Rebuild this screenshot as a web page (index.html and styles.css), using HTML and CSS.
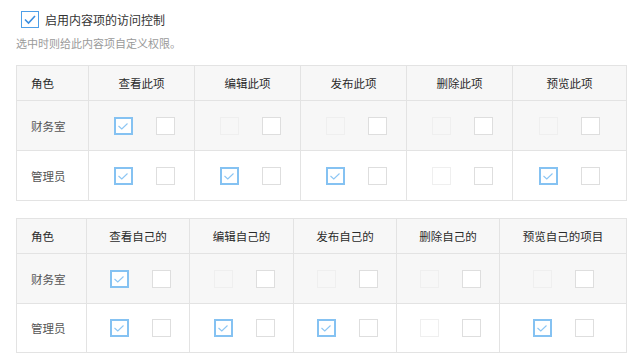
FILE: index.html
```html
<!DOCTYPE html>
<html lang="zh-CN">
<head>
<meta charset="utf-8">
<title>访问控制</title>
<link rel="stylesheet" href="styles.css">
</head>
<body>
<div class="page">
  <label class="enable">
    <span class="cb-main"><svg viewBox="0 0 18 17" width="18" height="17"><polyline points="4,8.5 7.5,12 14,5" fill="none" stroke="#3a8ee0" stroke-width="1.6"/></svg></span>
    <span class="enable-text">启用内容项的访问控制</span>
  </label>
  <p class="hint">选中时则给此内容项自定义权限。</p>

  <table class="perm perm-a">
    <colgroup>
      <col class="a-role"><col class="a-std"><col class="a-std"><col class="a-std"><col class="a-std"><col class="a-last">
    </colgroup>
    <thead>
      <tr><th class="role">角色</th><th>查看此项</th><th>编辑此项</th><th>发布此项</th><th>删除此项</th><th>预览此项</th></tr>
    </thead>
    <tbody>
      <tr class="alt">
        <td class="role">财务室</td>
        <td><div class="pair"><span class="cb on"><svg viewBox="0 0 18 18"><polyline points="4.5,9 7.8,12 13.5,6.5"/></svg></span><span class="cb"></span></div></td>
        <td><div class="pair"><span class="cb dis"></span><span class="cb"></span></div></td>
        <td><div class="pair"><span class="cb dis"></span><span class="cb"></span></div></td>
        <td><div class="pair"><span class="cb dis"></span><span class="cb"></span></div></td>
        <td class="last"><div class="pair"><span class="cb dis"></span><span class="cb"></span></div></td>
      </tr>
      <tr>
        <td class="role">管理员</td>
        <td><div class="pair"><span class="cb on"><svg viewBox="0 0 18 18"><polyline points="4.5,9 7.8,12 13.5,6.5"/></svg></span><span class="cb"></span></div></td>
        <td><div class="pair"><span class="cb on"><svg viewBox="0 0 18 18"><polyline points="4.5,9 7.8,12 13.5,6.5"/></svg></span><span class="cb"></span></div></td>
        <td><div class="pair"><span class="cb on"><svg viewBox="0 0 18 18"><polyline points="4.5,9 7.8,12 13.5,6.5"/></svg></span><span class="cb"></span></div></td>
        <td><div class="pair"><span class="cb dis"></span><span class="cb"></span></div></td>
        <td class="last"><div class="pair"><span class="cb on"><svg viewBox="0 0 18 18"><polyline points="4.5,9 7.8,12 13.5,6.5"/></svg></span><span class="cb"></span></div></td>
      </tr>
    </tbody>
  </table>

  <table class="perm perm-b">
    <colgroup>
      <col class="b-role"><col class="b-std"><col class="b-std2"><col class="b-std"><col class="b-std"><col class="b-last">
    </colgroup>
    <thead>
      <tr><th class="role">角色</th><th>查看自己的</th><th>编辑自己的</th><th>发布自己的</th><th>删除自己的</th><th>预览自己的项目</th></tr>
    </thead>
    <tbody>
      <tr class="alt">
        <td class="role">财务室</td>
        <td><div class="pair"><span class="cb on"><svg viewBox="0 0 18 18"><polyline points="4.5,9 7.8,12 13.5,6.5"/></svg></span><span class="cb"></span></div></td>
        <td><div class="pair"><span class="cb dis"></span><span class="cb"></span></div></td>
        <td><div class="pair"><span class="cb dis"></span><span class="cb"></span></div></td>
        <td><div class="pair"><span class="cb dis"></span><span class="cb"></span></div></td>
        <td class="last"><div class="pair"><span class="cb dis"></span><span class="cb"></span></div></td>
      </tr>
      <tr>
        <td class="role">管理员</td>
        <td><div class="pair"><span class="cb on"><svg viewBox="0 0 18 18"><polyline points="4.5,9 7.8,12 13.5,6.5"/></svg></span><span class="cb"></span></div></td>
        <td><div class="pair"><span class="cb on"><svg viewBox="0 0 18 18"><polyline points="4.5,9 7.8,12 13.5,6.5"/></svg></span><span class="cb"></span></div></td>
        <td><div class="pair"><span class="cb on"><svg viewBox="0 0 18 18"><polyline points="4.5,9 7.8,12 13.5,6.5"/></svg></span><span class="cb"></span></div></td>
        <td><div class="pair"><span class="cb dis"></span><span class="cb"></span></div></td>
        <td class="last"><div class="pair"><span class="cb on"><svg viewBox="0 0 18 18"><polyline points="4.5,9 7.8,12 13.5,6.5"/></svg></span><span class="cb"></span></div></td>
      </tr>
    </tbody>
  </table>
</div>
</body>
</html>
```

FILE: styles.css
```css
* { box-sizing: border-box; }

body {
  margin: 0;
  background: #fff;
  font-family: "Noto Sans CJK SC", "Noto Sans", sans-serif;
  color: #444;
}

.page {
  padding: 11px 14px 0 16px;
}

.enable {
  display: flex;
  align-items: center;
  gap: 6px;
  margin-left: 5px;
  height: 17px;
}

.cb-main {
  display: block;
  width: 18px;
  height: 17px;
  border: 1.5px solid #4d9fe8;
  background: #fff;
}

.cb-main svg {
  display: block;
  margin: -1.5px 0 0 -1.5px;
}

.enable-text {
  font-size: 12px;
  line-height: 17px;
  color: #333;
}

.hint {
  margin: 7px 0 0;
  font-size: 11px;
  line-height: 16px;
  color: #9a9a9a;
}

.perm {
  width: 610px;
  border-collapse: collapse;
  table-layout: fixed;
  margin-top: 14px;
}

.perm-b {
  margin-top: 17px;
}

.a-role { width: 72px; }
.a-std { width: 106px; }
.a-last { width: 114px; }

.b-role { width: 70px; }
.b-std { width: 103px; }
.b-std2 { width: 104px; }
.b-last { width: 127px; }

.perm th,
.perm td {
  border: 1px solid #e3e3e3;
  padding: 0;
}

.perm th {
  height: 35px;
  background: #f7f7f7;
  font-size: 11.5px;
  font-weight: normal;
  color: #2a2a2a;
  text-align: center;
}

.perm td {
  height: 50px;
  font-size: 11.5px;
  color: #555;
}

.perm-b tbody tr:last-child td {
  height: 49px;
}

.perm tr.alt td {
  background: #f7f7f7;
}

.perm .role {
  text-align: left;
  padding-left: 14px;
}

.pair {
  display: flex;
  justify-content: center;
  align-items: center;
  gap: 23px;
  padding-left: 5px;
}

.last .pair {
  padding-left: 0;
}

.cb {
  display: block;
  width: 19px;
  height: 18px;
  border: 1px solid #dedede;
  background: #fff;
}

.cb.dis {
  border-color: #efefef;
  background: transparent;
}

.cb.on {
  border: 2px solid #85c2f2;
  background: #fff;
}

.cb.on svg {
  display: block;
  width: 18px;
  height: 18px;
  margin: -2px 0 0 -2px;
}

.cb.on polyline {
  fill: none;
  stroke: #8cc6f4;
  stroke-width: 1.1;
}
```
